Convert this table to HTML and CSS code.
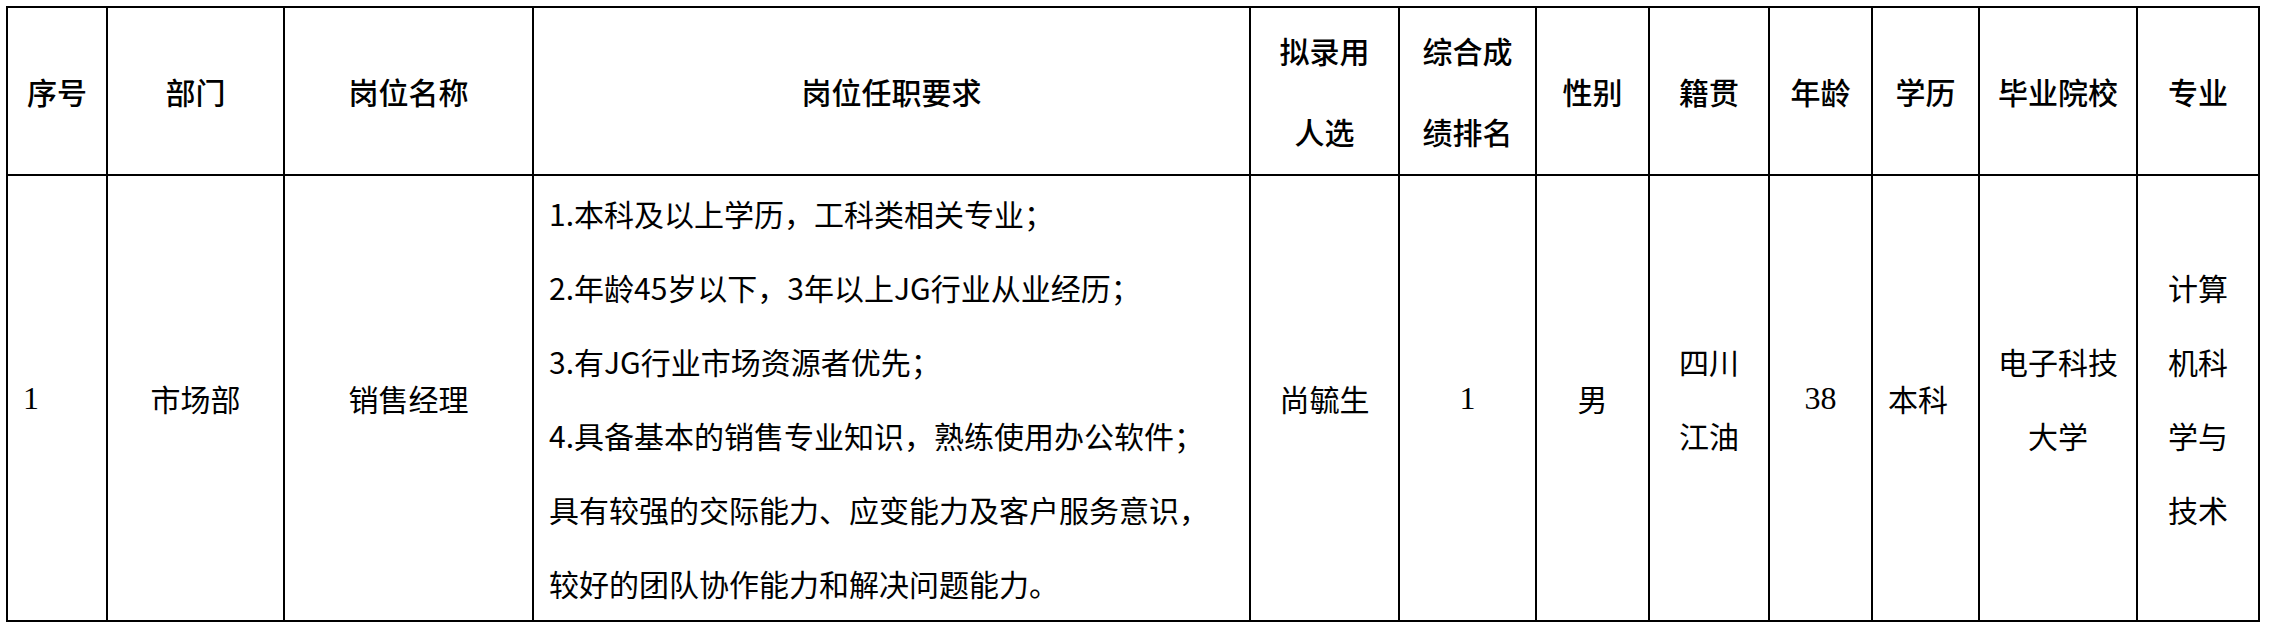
FILE: index.html
```html
<!DOCTYPE html>
<html lang="zh-CN">
<head>
<meta charset="utf-8">
<title>拟录用人选</title>
<link rel="stylesheet" href="styles.css">
</head>
<body>
<table class="sheet">
  <colgroup>
    <col class="w1"><col class="w2"><col class="w3"><col class="w4">
    <col class="w5"><col class="w6"><col class="w7"><col class="w8">
    <col class="w9"><col class="w10"><col class="w11"><col class="w12">
  </colgroup>
  <thead>
    <tr class="head-row">
      <th>序号</th>
      <th>部门</th>
      <th>岗位名称</th>
      <th>岗位任职要求</th>
      <th><div class="hl">拟录用</div><div class="hl">人选</div></th>
      <th><div class="hl">综合成</div><div class="hl">绩排名</div></th>
      <th>性别</th>
      <th>籍贯</th>
      <th>年龄</th>
      <th>学历</th>
      <th>毕业院校</th>
      <th>专业</th>
    </tr>
  </thead>
  <tbody>
    <tr class="body-row">
      <td class="left serif">1</td>
      <td>市场部</td>
      <td>销售经理</td>
      <td class="left req">
        <div class="ln">1.本科及以上学历，工科类相关专业；</div>
        <div class="ln">2.年龄45岁以下，3年以上JG行业从业经历；</div>
        <div class="ln">3.有JG行业市场资源者优先；</div>
        <div class="ln">4.具备基本的销售专业知识，熟练使用办公软件；</div>
        <div class="ln">具有较强的交际能力、应变能力及客户服务意识，</div>
        <div class="ln">较好的团队协作能力和解决问题能力。</div>
      </td>
      <td>尚毓生</td>
      <td class="serif">1</td>
      <td>男</td>
      <td><div class="ln">四川</div><div class="ln">江油</div></td>
      <td class="serif">38</td>
      <td class="left">本科</td>
      <td><div class="ln">电子科技</div><div class="ln">大学</div></td>
      <td><div class="ln">计算</div><div class="ln">机科</div><div class="ln">学与</div><div class="ln">技术</div></td>
    </tr>
  </tbody>
</table>
</body>
</html>
```

FILE: styles.css
```css
html, body {
  margin: 0;
  padding: 0;
  background: #ffffff;
}

body {
  padding: 6px 0 0 6px;
  font-family: "Noto Sans CJK SC", "Noto Sans", sans-serif;
  color: #000000;
}

.sheet {
  border-collapse: collapse;
  table-layout: fixed;
  width: 2254px;
}

.w1 { width: 100px; }
.w2 { width: 177px; }
.w3 { width: 249px; }
.w4 { width: 717px; }
.w5 { width: 149px; }
.w6 { width: 137px; }
.w7 { width: 113px; }
.w8 { width: 120px; }
.w9 { width: 103px; }
.w10 { width: 107px; }
.w11 { width: 158px; }
.w12 { width: 122px; }

.sheet th,
.sheet td {
  border: 2px solid #000000;
  padding: 0 15px;
  text-align: center;
  vertical-align: middle;
  font-size: 30px;
  line-height: 40px;
  white-space: nowrap;
}

.sheet th {
  font-weight: 500;
}

.head-row {
  height: 168px;
}

.body-row {
  height: 446px;
}

.hl {
  line-height: 81px;
}

.ln {
  line-height: 74px;
}

.left {
  text-align: left !important;
}

.sheet td.serif {
  font-family: "Liberation Serif", "Times New Roman", serif;
  font-size: 32px;
}

.req {
  padding-left: 16px;
}
```
